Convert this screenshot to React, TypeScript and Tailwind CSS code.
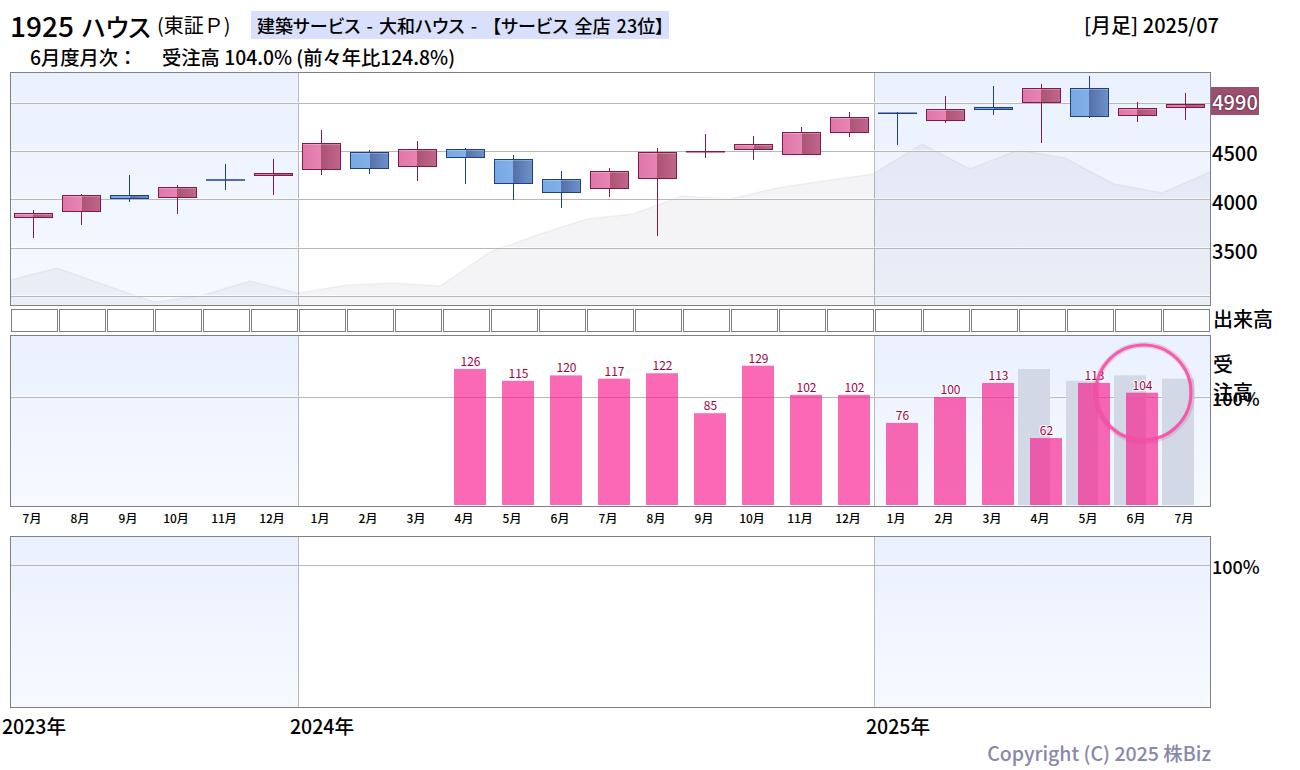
import React from 'react';

interface Candle {
  up: boolean;
  top: number;
  bottom: number;
  high: number;
  low: number;
}

// page coordinates read off the chart, one entry per month
const candles: Candle[] = [
  { up: true, top: 213.5, bottom: 217.5, high: 210, low: 238 },
  { up: true, top: 195.5, bottom: 211.5, high: 194, low: 225 },
  { up: false, top: 195.5, bottom: 198.5, high: 175, low: 202 },
  { up: true, top: 187.5, bottom: 197.5, high: 185, low: 214 },
  { up: false, top: 180, bottom: 180, high: 164, low: 190 },
  { up: true, top: 173.5, bottom: 175.5, high: 159, low: 195 },
  { up: true, top: 143.5, bottom: 169.5, high: 130, low: 175 },
  { up: false, top: 152.5, bottom: 168.5, high: 150, low: 174 },
  { up: true, top: 149.5, bottom: 166.5, high: 141, low: 181 },
  { up: false, top: 149.5, bottom: 157.5, high: 148, low: 184 },
  { up: false, top: 159.5, bottom: 183.5, high: 155, low: 200 },
  { up: false, top: 179.5, bottom: 192.5, high: 171, low: 208 },
  { up: true, top: 171.5, bottom: 188.5, high: 168, low: 197 },
  { up: true, top: 152.5, bottom: 178.5, high: 148, low: 236 },
  { up: true, top: 151.7, bottom: 151.7, high: 134, low: 158 },
  { up: true, top: 144.5, bottom: 149.5, high: 136, low: 160 },
  { up: true, top: 132.5, bottom: 154.5, high: 127, low: 155 },
  { up: true, top: 117.5, bottom: 132.5, high: 112, low: 137 },
  { up: false, top: 113.3, bottom: 113.3, high: 112, low: 145 },
  { up: true, top: 109.5, bottom: 120.5, high: 96, low: 123 },
  { up: false, top: 107.5, bottom: 109.5, high: 86, low: 115 },
  { up: true, top: 88.5, bottom: 102.5, high: 84, low: 143 },
  { up: false, top: 88.5, bottom: 116.5, high: 76, low: 118 },
  { up: true, top: 108.5, bottom: 115.5, high: 102, low: 122 },
  { up: true, top: 104.5, bottom: 107.5, high: 93, low: 120 },
];

const areaPoints =
  '10,280 57,268 105,285 154,302 200,296 250,281 298,293 347,285 393,283 440,286 490,252 537,235 587,219 633,214 682,196 730,199 777,188 823,181 873,174 922,144 970,169 1018,150 1065,158 1114,184 1162,193 1210,172';

const orders: (number | null)[] = [
  null, null, null, null, null, null, null, null, null,
  126, 115, 120, 117, 122, 85, 129, 102, 102, 76, 100, 113, 62, 113, 104, null,
];
const lastYear: { i: number; v: number }[] = [
  { i: 21, v: 126 },
  { i: 22, v: 115 },
  { i: 23, v: 120 },
  { i: 24, v: 117 },
];

const months = ['7月', '8月', '9月', '10月', '11月', '12月', '1月', '2月', '3月', '4月', '5月', '6月', '7月', '8月', '9月', '10月', '11月', '12月', '1月', '2月', '3月', '4月', '5月', '6月', '7月'];

const Shading: React.FC = () => (
  <div className="absolute inset-0 flex">
    <div className="w-[287px] bg-gradient-to-b from-[#eaf1fe] to-[#f6f9ff]" />
    <div className="w-[576px] border-l border-l-[#b9b9b9] bg-white" />
    <div className="flex-1 border-l border-l-[#b9b9b9] bg-gradient-to-b from-[#eaf1fe] to-[#f6f9ff]" />
  </div>
);

const GridLine: React.FC<{ y: number }> = ({ y }) => (
  <>
    <line x1="11" x2="1210" y1={y - 1} y2={y - 1} stroke="#ffffff" strokeOpacity="0.7" />
    <line x1="11" x2="1210" y1={y} y2={y} stroke="#b8b8b8" />
  </>
);

const PriceChart: React.FC = () => (
  <svg className="absolute inset-0" width="1199" height="232" viewBox="11 73 1199 232">
    <defs>
      <linearGradient id="up">
        <stop offset="0" stopColor="#e077a9" />
        <stop offset="0.5" stopColor="#e685b3" />
        <stop offset="0.5" stopColor="#ab5474" />
        <stop offset="1" stopColor="#c2668c" />
      </linearGradient>
      <linearGradient id="down">
        <stop offset="0" stopColor="#78a8e2" />
        <stop offset="0.5" stopColor="#82b0e8" />
        <stop offset="0.5" stopColor="#5570a8" />
        <stop offset="1" stopColor="#6e92cb" />
      </linearGradient>
    </defs>
    <polygon points={`${areaPoints} 1210,305 10,305`} fill="#40406a" fillOpacity="0.06" />
    <polyline points={areaPoints} fill="none" stroke="#40406a" strokeOpacity="0.06" strokeWidth="1.5" />
    {[103.5, 151.5, 199.5, 248.5, 296.5].map((y) => (
      <GridLine key={y} y={y} />
    ))}
    {candles.map((c, i) => {
      const x = 33.5 + 48 * i;
      const stroke = c.up ? '#7f1b4a' : '#1f4086';
      return (
        <g key={i}>
          <line x1={x} x2={x} y1={c.high} y2={c.low} stroke={stroke} />
          {c.top === c.bottom ? (
            <line x1={x - 19.5} x2={x + 19.5} y1={c.top} y2={c.top} stroke={stroke} strokeWidth="1.6" />
          ) : (
            <>
              <rect
                x={x - 19}
                y={c.top}
                width="38"
                height={c.bottom - c.top}
                fill={c.up ? 'url(#up)' : 'url(#down)'}
                stroke={stroke}
              />
              {c.bottom - c.top > 3 && (
                <line x1={x - 18.5} x2={x + 18.5} y1={c.top + 1} y2={c.top + 1} stroke="#ffffff" strokeOpacity="0.25" />
              )}
            </>
          )}
        </g>
      );
    })}
  </svg>
);

const OrderChart: React.FC = () => (
  <svg className="absolute inset-0 overflow-visible" width="1199" height="170" viewBox="11 336 1199 170">
    <GridLine y={397.5} />
    {lastYear.map((b) => (
      <rect key={b.i} x={10 + 48 * b.i} y={505 - b.v * 1.08} width="32" height={b.v * 1.08} fill="#d3d8e6" />
    ))}
    {orders.map((v, i) =>
      v === null ? null : (
        <g key={i}>
          <rect x={22 + 48 * i} y={505 - v * 1.08} width="32" height={v * 1.08} fill="#f7188a" fillOpacity="0.65" />
          <text
            x={38.5 + 48 * i}
            y={502 - v * 1.08}
            textAnchor="middle"
            fontSize="12"
            fontWeight="400"
            fill="#a3003f"
            stroke="#ffffff"
            strokeWidth="2"
            paintOrder="stroke"
          >
            {v}
          </text>
        </g>
      ),
    )}
    <circle cx="1144" cy="393" r="48" fill="none" stroke="#b04a90" strokeOpacity="0.2" strokeWidth="6" />
    <circle cx="1143.5" cy="392.5" r="47.5" fill="none" stroke="#fb4da5" strokeOpacity="0.9" strokeWidth="3" />
  </svg>
);

export default function App() {
  return (
    <div className="flex h-[770px] w-[1300px] flex-col overflow-hidden bg-white font-['Noto_Sans_CJK_JP',sans-serif] font-medium text-black">
      {/* title */}
      <div className="flex h-[44px] items-center pl-[10px] pt-[6px]">
        <span className="flex w-[147px] items-baseline gap-[8px] leading-none whitespace-nowrap [font-feature-settings:'palt']">
          <span className="text-[28px]">1925</span>
          <span className="text-[25px]">ハウス</span>
        </span>
        <span className="w-[94px] text-[20px] font-normal leading-none whitespace-nowrap">(東証Ｐ)</span>
        <span className="flex h-[28px] w-[418px] items-center bg-[#d9e0fc] pl-[6px] text-[18px] whitespace-pre [word-spacing:2px] [font-feature-settings:'palt']">
          建築サービス - 大和ハウス - <span className="[font-feature-settings:normal]">【</span>サービス 全店 23位】
        </span>
        <span className="ml-[415px] text-[20px] whitespace-nowrap">[月足] 2025/07</span>
      </div>
      <div className="flex h-[28px] items-center pb-[2px] pl-[30px] text-[19.3px] whitespace-nowrap">
        <span className="w-[132px]">6月度月次：</span>
        <span>受注高 104.0% (前々年比124.8%)</span>
      </div>

      {/* price */}
      <div className="flex h-[234px] pl-[10px]">
        <div className="relative h-[234px] w-[1201px] border border-[#808080]">
          <div className="relative h-full w-full">
            <Shading />
            <PriceChart />
          </div>
        </div>
        <div className="flex w-[60px] flex-col pt-[15px] text-[20px] leading-[28px]">
          <span className="flex h-[28px] w-[48px] items-center justify-center bg-[#9c5070] pt-[1px] text-white [text-shadow:0_0_2px_#3a0a20]">
            4990
          </span>
          <span className="mt-[24px] pl-[1px]">4500</span>
          <span className="mt-[21px] pl-[1px]">4000</span>
          <span className="mt-[21px] pl-[1px]">3500</span>
        </div>
      </div>

      {/* volume */}
      <div className="mt-[3px] flex h-[23px] gap-px pl-[11px]">
        {months.map((_, i) => (
          <div key={i} className="h-[23px] w-[47px] border border-[#808080] bg-white" />
        ))}
        <span className="ml-[2px] text-[20px] leading-[20px] whitespace-nowrap">出来高</span>
      </div>

      {/* orders */}
      <div className="mt-[3px] flex h-[172px] pl-[10px]">
        <div className="relative h-[172px] w-[1201px] border border-[#808080]">
          <div className="relative h-full w-full">
            <Shading />
            <OrderChart />
          </div>
        </div>
        <div className="relative w-[50px] pl-[2px] pt-[15px] text-[20px] leading-[28px]">
          受<br />
          注高
          <span className="absolute left-[1px] top-[49px] text-[18px]">100%</span>
        </div>
      </div>

      {/* months */}
      <div className="flex h-[29px] pl-[8px] pt-[3px]">
        {months.map((m, i) => (
          <span key={i} className="w-[48px] text-center text-[12px] leading-[16px]">
            {m}
          </span>
        ))}
      </div>

      {/* lower panel */}
      <div className="flex h-[172px] pl-[10px]">
        <div className="relative h-[172px] w-[1201px] border border-[#808080]">
          <div className="relative h-full w-full">
            <Shading />
            <div className="absolute inset-x-0 top-[28px] h-px bg-[#b8b8b8]" />
          </div>
        </div>
        <span className="pl-px pt-[16px] text-[18px] leading-[28px]">100%</span>
      </div>

      {/* years */}
      <div className="flex h-[32px] items-center pl-[2px] pt-[3px] text-[19.5px]">
        <span className="w-[288px]">2023年</span>
        <span className="w-[576px]">2024年</span>
        <span>2025年</span>
      </div>
      <div className="w-[1211px] text-right text-[19.5px] leading-[26px] text-[#8888aa]">
        Copyright (C) 2025 株Biz
      </div>
    </div>
  );
}
